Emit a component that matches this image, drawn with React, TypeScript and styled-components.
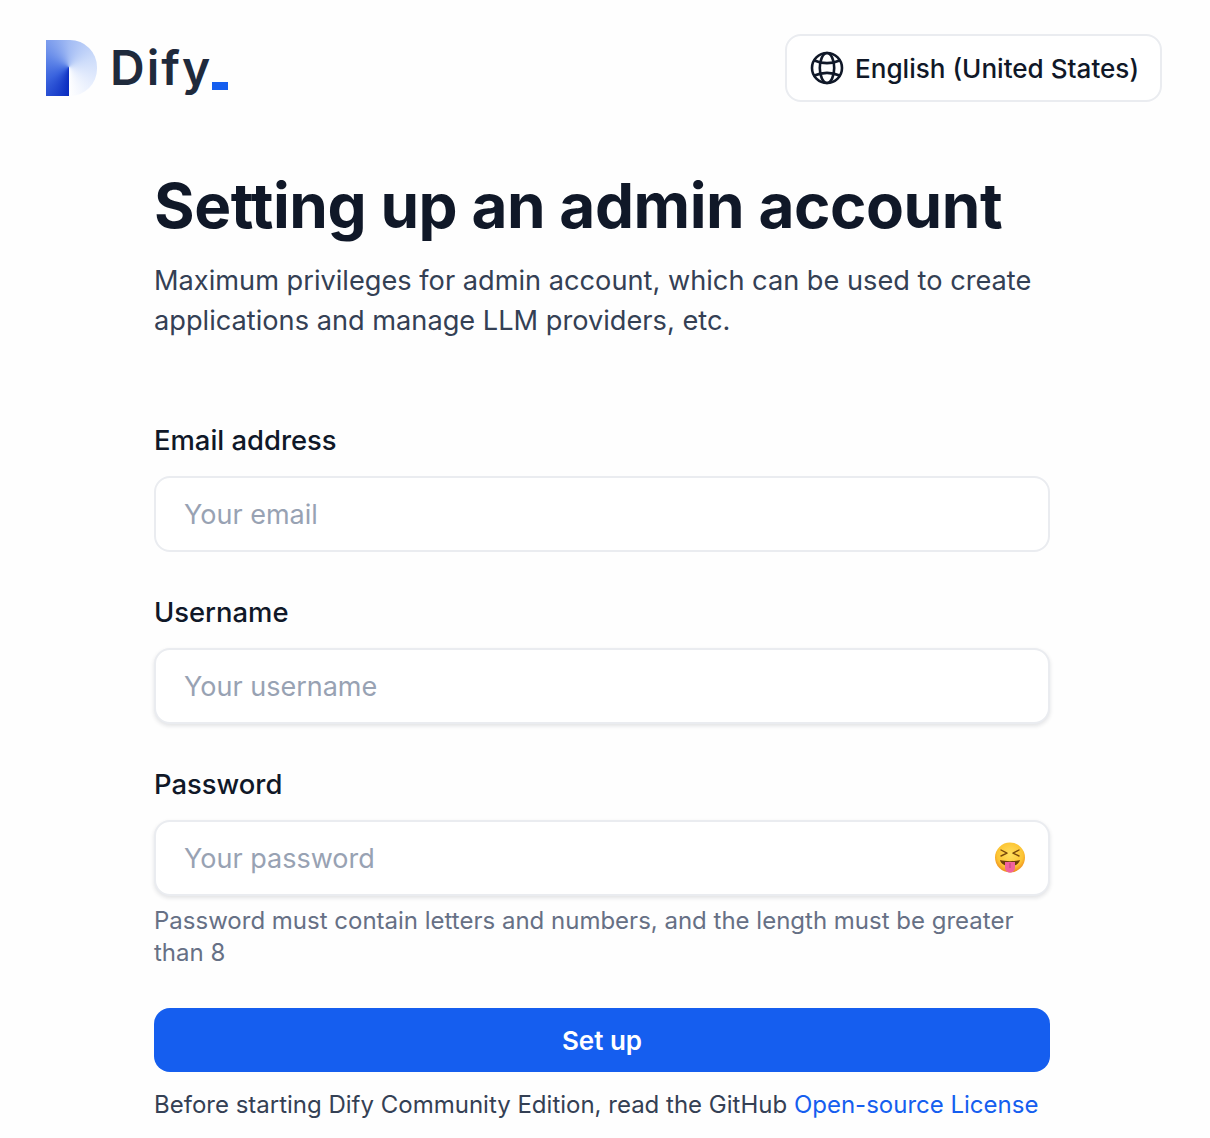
import React from "react";
import styled, { createGlobalStyle } from "styled-components";

const GlobalStyle = createGlobalStyle`
  html, body {
    margin: 0;
    padding: 0;
    background: #fefefe;
    font-family: Inter, "Liberation Sans", sans-serif;
    -webkit-font-smoothing: antialiased;
  }
  * { box-sizing: border-box; }
`;

const Page = styled.div`
  width: 1210px;
  height: 1138px;
  overflow: hidden;
  padding: 34px 48px 0 46px;
`;

const Header = styled.header`
  display: flex;
  align-items: flex-start;
  justify-content: space-between;
`;

const Logo = styled.div`
  display: flex;
  align-items: center;
  gap: 13px;
  height: 68px;
`;

const LogoMark = styled.div`
  width: 51px;
  height: 56px;
  border-radius: 0 27px 27px 0;
  background: conic-gradient(
    from 180deg at 23px 27px,
    #0a2cc0 0deg,
    #3a63de 60deg,
    #5f85e8 110deg,
    #a3bcf4 180deg,
    #cddcfa 250deg,
    #e4ecfd 300deg,
    #ffffff 360deg
  );
`;

const Wordmark = styled.div`
  display: flex;
  align-items: flex-end;
  color: #1f2a3c;
  font-size: 48px;
  font-weight: 600;
  line-height: 56px;
  letter-spacing: 2px;
`;

const Cursor = styled.span`
  width: 16px;
  height: 8px;
  margin: 0 0 6px 0;
  background: #155eef;
`;

const LangButton = styled.button`
  display: flex;
  align-items: center;
  gap: 11px;
  width: 377px;
  height: 68px;
  padding: 0 0 0 23px;
  background: #fff;
  border: 2px solid #eaecf0;
  border-radius: 16px;
  color: #101828;
  font: 500 26.1px Inter, sans-serif;
`;

const Main = styled.main`
  width: 896px;
  margin: 68px 0 0 108px;
`;

const Title = styled.h1`
  margin: 0;
  color: #101828;
  font-size: 62px;
  font-weight: 700;
  line-height: 72px;
  letter-spacing: -0.45px;
`;

const Subtitle = styled.p`
  margin: 19px 0 0;
  color: #344054;
  font-size: 27.2px;
  line-height: 40px;
`;

const Form = styled.form`
  display: flex;
  flex-direction: column;
  margin-top: 79px;
`;

const Field = styled.div`
  display: flex;
  flex-direction: column;
  margin-bottom: 40px;
`;

const Label = styled.label`
  margin-bottom: 16px;
  color: #101828;
  font-size: 27.4px;
  font-weight: 500;
  line-height: 40px;
`;

const InputWrap = styled.div<{ $raised?: boolean }>`
  display: flex;
  align-items: center;
  height: 76px;
  padding: 0 22px 0 28px;
  background: #fff;
  border: 2px solid #eaecf0;
  border-radius: 16px;
  box-shadow: ${(p) => (p.$raised ? "0 2px 4px rgba(16, 24, 40, 0.12)" : "none")};
`;

const Input = styled.input`
  flex: 1;
  min-width: 0;
  padding: 0;
  border: 0;
  outline: 0;
  background: transparent;
  color: #101828;
  font: 400 27px Inter, sans-serif;
  &::placeholder { color: #98a2b3; opacity: 1; }
`;

const Hint = styled.p`
  margin: 9px 0 0;
  color: #667085;
  font-size: 24px;
  line-height: 32px;
`;

const Submit = styled.button`
  height: 64px;
  margin-top: -1px;
  background: #155eef;
  border: 0;
  border-radius: 16px;
  color: #fff;
  font: 600 26px Inter, sans-serif;
`;

const Terms = styled.p`
  margin: 17px 0 0;
  color: #344054;
  font-size: 24px;
  line-height: 32px;
`;

const TermsLink = styled.a`
  color: #155eef;
  text-decoration: none;
`;

const GlobeIcon = () => (
  <svg width="34" height="34" viewBox="0 0 34 34" fill="none" stroke="#101828" strokeWidth="2.6">
    <circle cx="17" cy="17" r="15" />
    <ellipse cx="17" cy="17" rx="7.2" ry="15" />
    <path d="M4.5 9.5C12 13 22 13 29.5 9.5M4.5 24.5C12 21 22 21 29.5 24.5" />
  </svg>
);

const SquintEmoji = () => (
  <svg width="32" height="32" viewBox="0 0 32 32">
    <defs>
      <radialGradient id="face" cx="0.5" cy="0.4" r="0.6">
        <stop offset="0" stopColor="#ffdf5e" />
        <stop offset="0.72" stopColor="#fcc433" />
        <stop offset="1" stopColor="#ee8a1c" />
      </radialGradient>
    </defs>
    <circle cx="16" cy="15.5" r="15" fill="url(#face)" />
    <path d="M7 8L13 11.2L7 14M25 8L19 11.2L25 14" fill="none" stroke="#7a4a0c" strokeWidth="1.4" strokeLinecap="round" strokeLinejoin="round" />
    <path d="M6 18C11 19.5 21 19.5 26 18C25 22 21 24 16 24C11 24 7 22 6 18Z" fill="#6b3d0a" />
    <path d="M11 20H21V25.5C21 28.5 18.7 30.5 16 30.5C13.3 30.5 11 28.5 11 25.5Z" fill="#f0629d" />
    <path d="M16 21V26" stroke="#c73c7c" strokeWidth="1" />
  </svg>
);

export default function App() {
  return (
    <Page>
      <GlobalStyle />
      <Header>
        <Logo>
          <LogoMark />
          <Wordmark>
            Dify
            <Cursor />
          </Wordmark>
        </Logo>
        <LangButton type="button">
          <GlobeIcon />
          English (United States)
        </LangButton>
      </Header>
      <Main>
        <Title>Setting up an admin account</Title>
        <Subtitle>
          Maximum privileges for admin account, which can be used to create applications and manage LLM providers, etc.
        </Subtitle>
        <Form>
          <Field>
            <Label>Email address</Label>
            <InputWrap>
              <Input placeholder="Your email" />
            </InputWrap>
          </Field>
          <Field>
            <Label>Username</Label>
            <InputWrap $raised>
              <Input placeholder="Your username" />
            </InputWrap>
          </Field>
          <Field>
            <Label>Password</Label>
            <InputWrap $raised>
              <Input placeholder="Your password" />
              <SquintEmoji />
            </InputWrap>
            <Hint>Password must contain letters and numbers, and the length must be greater than 8</Hint>
          </Field>
          <Submit type="button">Set up</Submit>
        </Form>
        <Terms>
          Before starting Dify Community Edition, read the GitHub <TermsLink href="#">Open-source License</TermsLink>
        </Terms>
      </Main>
    </Page>
  );
}
